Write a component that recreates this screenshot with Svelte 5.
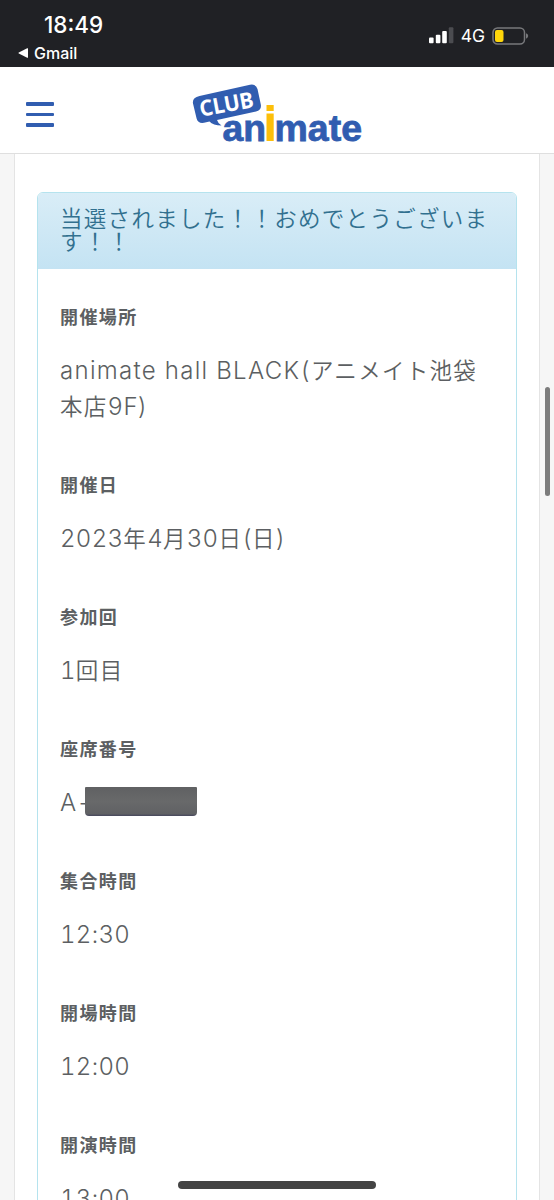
<script lang="ts">
  const details = [
    { label: "開催場所", value: "animate hall BLACK(アニメイト池袋本店9F)" },
    { label: "開催日", value: "2023年4月30日(日)" },
    { label: "参加回", value: "1回目" },
    { label: "座席番号", value: "A-", masked: true },
    { label: "集合時間", value: "12:30" },
    { label: "開場時間", value: "12:00" },
    { label: "開演時間", value: "13:00" },
  ];

  // split into latin and japanese runs, they are set in different sizes
  function runs(text: string) {
    return text.match(/[\x20-\x7e]+|[^\x20-\x7e]+/g) ?? [];
  }

  const isLatin = (s: string) => /^[\x20-\x7e]/.test(s);
  const isWords = (s: string) => /[a-z]/.test(s);
</script>

<div class="screen">
  <div class="status">
    <div class="left">
      <div class="time">18:49</div>
      <div class="back">
        <svg width="11" height="10" viewBox="0 0 11 10"><path d="M10 .6v8.8Q10 10 9.2 9.7L.8 5.5Q0 5 .8 4.5L9.2.3Q10 0 10 .6Z" fill="#fff" /></svg>
        <span>Gmail</span>
      </div>
    </div>
    <div class="right">
      <svg width="25" height="18" viewBox="0 0 25 18" fill="#fff">
        <rect x="0" y="10.5" width="4.6" height="5.8" rx="1" />
        <rect x="6.8" y="7.8" width="4.6" height="8.5" rx="1" />
        <rect x="13.2" y="4" width="4.6" height="12.3" rx="1" />
        <rect x="19.8" y="0.2" width="4.6" height="16.1" rx="1" fill="#4b4c50" />
      </svg>
      <span class="network">4G</span>
      <svg width="37" height="18" viewBox="0 0 37 18">
        <rect x="1" y="1" width="31.5" height="16" rx="4.5" fill="none" stroke="#77787b" stroke-width="1.5" />
        <rect x="3" y="3" width="8.5" height="12" rx="2" fill="#ffd60a" />
        <path d="M34 6.3q2.2.8 2.2 2.7T34 11.7Z" fill="#77787b" />
      </svg>
    </div>
  </div>

  <header>
    <button class="menu" type="button" aria-label="menu">
      <i></i><i></i><i></i>
    </button>
    <svg class="logo" width="174" height="64" viewBox="0 0 174 64">
      <path d="M7.5 12 58 .8Q64 -.3 65.5 5L68.8 20.5Q69.8 26 64 27.5L25 36Q26 39.500 29.500 41.500Q21 41.500 17.500 37.500L12 38.8Q6 39.800 4.600 34.500L1 19.500Q0 13.700 7.500 12Z" fill="#315db0" />
      <text class="club" transform="translate(9 32.8) rotate(-10.5)" textLength="54.5" lengthAdjust="spacingAndGlyphs">CLUB</text>
      <text class="word" x="30.5" y="57" textLength="43.5" lengthAdjust="spacingAndGlyphs">an</text>
      <rect x="74.500" y="21" width="7.200" height="6" fill="#fcbf0a" />
      <rect x="74.500" y="29.500" width="7.200" height="27.500" fill="#fcbf0a" />
      <text class="word" x="82.5" y="57" textLength="87.5" lengthAdjust="spacingAndGlyphs">mate</text>
    </svg>
  </header>

  <main>
    <section class="panel">
      <h1>当選されました！！おめでとうございます！！</h1>
      <dl>
        {#each details as item}
          <dt>{item.label}</dt>
          <dd>{#each runs(item.value) as run}<span class:latin={isLatin(run)} class:words={isWords(run)}>{run}</span>{/each}{#if item.masked}<span class="mask"></span>{/if}</dd>
        {/each}
      </dl>
    </section>
  </main>

  <div class="scrollbar"></div>
  <div class="home"></div>
</div>

<style>
  :global(body) {
    margin: 0;
    overflow: hidden;
  }
  .screen {
    position: relative;
    display: flex;
    flex-direction: column;
    width: 554px;
    height: 1200px;
    overflow: hidden;
    background: #f6f6f6;
    font-family: "Noto Sans CJK JP", sans-serif;
  }

  /* status bar */
  .status {
    display: flex;
    flex: none;
    justify-content: space-between;
    box-sizing: border-box;
    height: 67px;
    padding: 11px 25px 0 18px;
    background: #202125;
    color: #fff;
    font-family: Inter, sans-serif;
  }
  .time {
    padding-left: 26px;
    font-size: 22.5px;
    font-weight: 550;
    line-height: 28px;
  }
  .back {
    display: flex;
    align-items: center;
    gap: 5px;
    font-size: 16px;
    font-weight: 500;
    line-height: 28px;
  }
  .right {
    display: flex;
    align-items: center;
    height: 49px;
  }
  .network {
    margin: 0 7px 0 7px;
    font-size: 17.5px;
  }

  /* site header */
  header {
    display: flex;
    flex: none;
    align-items: flex-start;
    box-sizing: border-box;
    height: 87px;
    padding: 17px 0 0 26px;
    border-bottom: 1px solid #dfdfdf;
    background: #fff;
  }
  .menu {
    display: flex;
    flex-direction: column;
    gap: 7px;
    width: 28px;
    margin: 18px 138px 0 0;
    padding: 0;
    border: 0;
    background: none;
  }
  .menu i {
    height: 3.5px;
    border-radius: 1px;
    background: #315db0;
  }
  .logo {
    overflow: visible;
  }
  .club {
    fill: #fff;
    font: bold 22px "Noto Sans", sans-serif;
  }
  .word {
    fill: #315db0;
    stroke: #315db0;
    stroke-width: 0.8px;
    font: bold 37px "Liberation Sans", sans-serif;
  }

  /* result panel */
  main {
    flex: 1;
    box-sizing: border-box;
    min-height: 0;
    margin: 0 14px;
    padding: 38px 21px 0 22px;
    border: solid #e4e4e4;
    border-width: 0 1px;
    background: #fff;
  }
  .panel {
    box-sizing: border-box;
    width: 480px;
    border: 1px solid #b5e3ee;
    border-radius: 6px;
    overflow: hidden;
  }
  h1 {
    box-sizing: border-box;
    height: 76px;
    margin: 0;
    padding: 13px 22px 0;
    background: linear-gradient(#d9edf7, #c4e3f3);
    color: #31708f;
    font-size: 22.5px;
    font-weight: 350;
    line-height: 23px;
    letter-spacing: 1.3px;
  }
  dl {
    margin: 0;
    padding: 29px 22px 0;
    color: #5c5f62;
  }
  dt {
    font-size: 18px;
    font-weight: 700;
    line-height: 36px;
    letter-spacing: 1.4px;
  }
  dd {
    margin: 19px 0 41px;
    font-family: Inter, "Noto Sans CJK JP", sans-serif;
    font-size: 22.5px;
    font-weight: 350;
    line-height: 36px;
    letter-spacing: 1.3px;
  }
  .latin {
    font-size: 24px;
    font-weight: 300;
    letter-spacing: 0.3px;
    font-variant-numeric: tabular-nums;
  }
  .words {
    letter-spacing: 1.3px;
  }
  .mask {
    display: inline-block;
    width: 112px;
    height: 29px;
    margin-left: -7px;
    border-radius: 1px 1px 4px 4px;
    background: linear-gradient(#606163, #68696a 50%, #606164 92%, #45465c);
    vertical-align: -5px;
  }

  /* overlays */
  .scrollbar {
    position: absolute;
    top: 387px;
    right: 4px;
    width: 5px;
    height: 109px;
    border-radius: 3px;
    background: #7c7c7c;
  }
  .home {
    position: absolute;
    bottom: 11px;
    left: 178px;
    width: 198px;
    height: 8px;
    border-radius: 4px;
    background: #444;
  }
</style>
